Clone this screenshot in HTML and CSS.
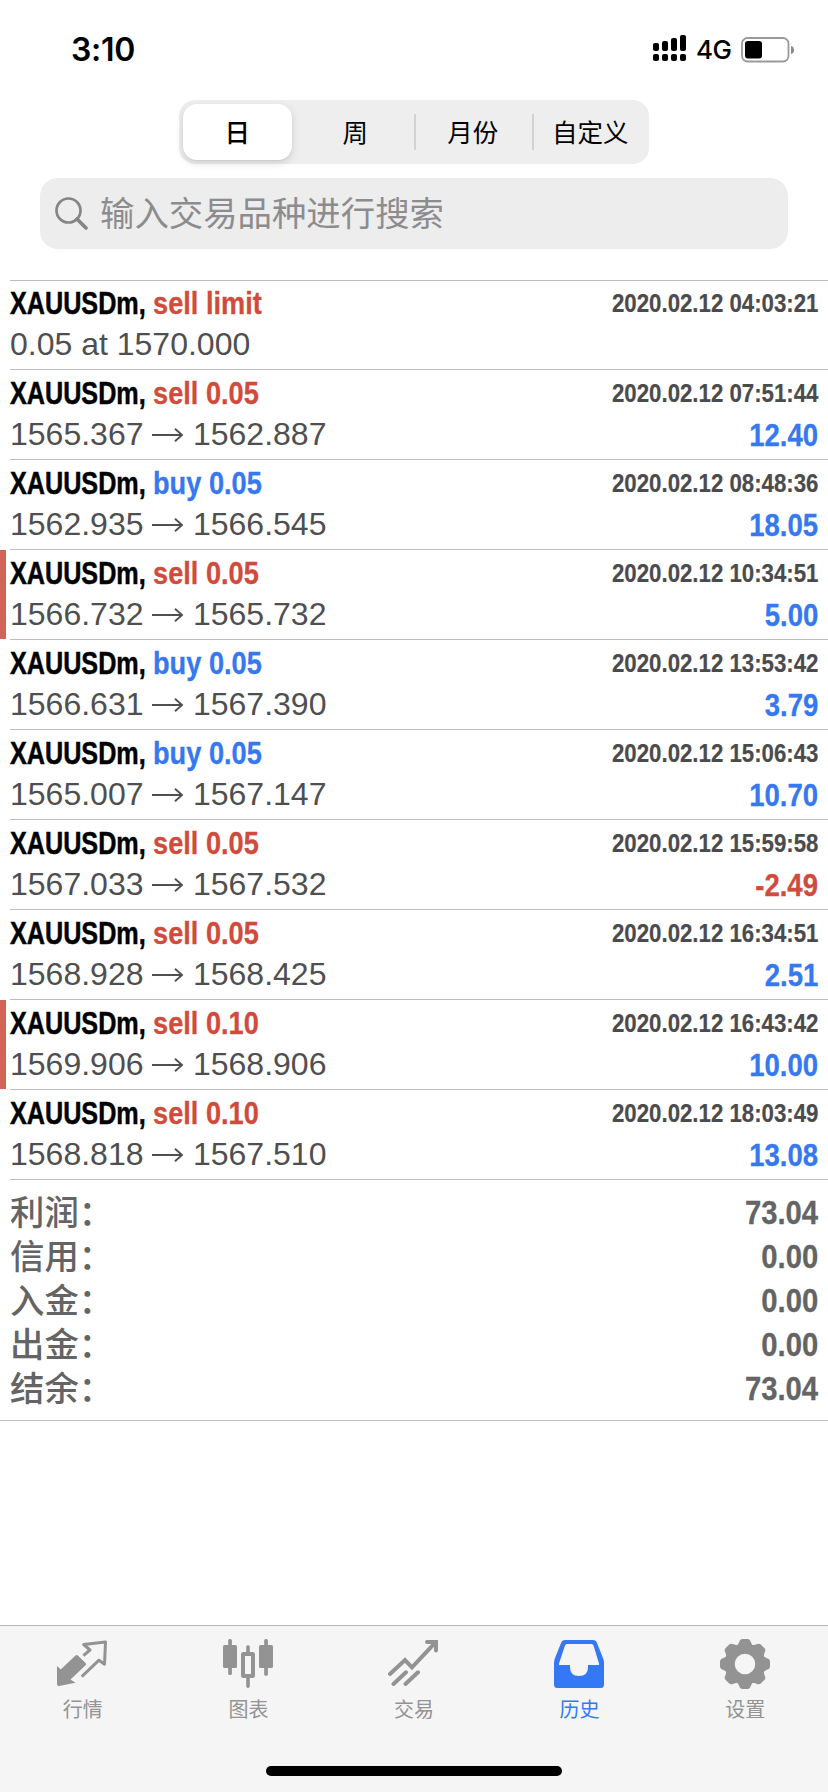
FILE: index.html
```html
<!DOCTYPE html>
<html lang="zh-CN">
<head>
<meta charset="utf-8">
<title>历史</title>
<link rel="stylesheet" href="styles.css">
</head>
<body>
<div class="screen">
  <header class="status">
    <span class="clock">3:10</span>
    <div class="indicators">
      <svg class="signal" width="34" height="27" viewBox="0 0 34 27">
        <rect x="0" y="8" width="6" height="8" rx="2"/><rect x="9" y="6" width="6" height="10" rx="2"/><rect x="18" y="3" width="6" height="13" rx="2"/><rect x="27" y="0" width="6" height="16" rx="2"/>
        <rect x="0" y="19" width="6" height="7" rx="2"/><rect x="9" y="19" width="6" height="7" rx="2"/><rect x="18" y="19" width="6" height="7" rx="2"/><rect x="27" y="19" width="6" height="7" rx="2"/>
      </svg>
      <span class="network">4G</span>
      <svg class="battery" width="54" height="26" viewBox="0 0 54 26">
        <rect x="1" y="1" width="46.5" height="23.5" rx="5.5" fill="none" stroke="#999" stroke-width="1.8"/>
        <rect x="4" y="4" width="17" height="17.5" rx="3"/>
        <path d="M50 9q3 .5 3 4t-3 4z" fill="#8a8a8a"/>
      </svg>
    </div>
  </header>

  <nav class="segments">
    <span class="segment selected">日</span>
    <span class="segment">周</span>
    <span class="segment divided">月份</span>
    <span class="segment divided">自定义</span>
  </nav>

  <div class="search">
    <svg width="34" height="34" viewBox="0 0 34 34" fill="none" stroke="#858587"><circle cx="13.5" cy="13.500" r="12" stroke-width="2.700"/><path d="M22 22l9 9" stroke-width="3.700" stroke-linecap="round"/></svg>
    <span class="placeholder">输入交易品种进行搜索</span>
  </div>

  <main class="deals">
    <article class="deal pending">
      <div class="line"><b class="symbol">XAUUSDm,</b><b class="side sell">sell limit</b><b class="date">2020.02.12 04:03:21</b></div>
      <div class="line"><span class="price">0.05 at 1570.000</span></div>
    </article>
    <article class="deal">
      <div class="line"><b class="symbol">XAUUSDm,</b><b class="side sell">sell 0.05</b><b class="date">2020.02.12 07:51:44</b></div>
      <div class="line"><span class="price">1565.367</span><svg class="arrow" viewBox="0 0 32 14"><path d="M0 7H30M23 .8L30 7L23 13.200"/></svg><span class="price">1562.887</span><b class="profit">12.40</b></div>
    </article>
    <article class="deal">
      <div class="line"><b class="symbol">XAUUSDm,</b><b class="side buy">buy 0.05</b><b class="date">2020.02.12 08:48:36</b></div>
      <div class="line"><span class="price">1562.935</span><svg class="arrow" viewBox="0 0 32 14"><path d="M0 7H30M23 .8L30 7L23 13.200"/></svg><span class="price">1566.545</span><b class="profit">18.05</b></div>
    </article>
    <article class="deal marked">
      <div class="line"><b class="symbol">XAUUSDm,</b><b class="side sell">sell 0.05</b><b class="date">2020.02.12 10:34:51</b></div>
      <div class="line"><span class="price">1566.732</span><svg class="arrow" viewBox="0 0 32 14"><path d="M0 7H30M23 .8L30 7L23 13.200"/></svg><span class="price">1565.732</span><b class="profit">5.00</b></div>
    </article>
    <article class="deal">
      <div class="line"><b class="symbol">XAUUSDm,</b><b class="side buy">buy 0.05</b><b class="date">2020.02.12 13:53:42</b></div>
      <div class="line"><span class="price">1566.631</span><svg class="arrow" viewBox="0 0 32 14"><path d="M0 7H30M23 .8L30 7L23 13.200"/></svg><span class="price">1567.390</span><b class="profit">3.79</b></div>
    </article>
    <article class="deal">
      <div class="line"><b class="symbol">XAUUSDm,</b><b class="side buy">buy 0.05</b><b class="date">2020.02.12 15:06:43</b></div>
      <div class="line"><span class="price">1565.007</span><svg class="arrow" viewBox="0 0 32 14"><path d="M0 7H30M23 .8L30 7L23 13.200"/></svg><span class="price">1567.147</span><b class="profit">10.70</b></div>
    </article>
    <article class="deal">
      <div class="line"><b class="symbol">XAUUSDm,</b><b class="side sell">sell 0.05</b><b class="date">2020.02.12 15:59:58</b></div>
      <div class="line"><span class="price">1567.033</span><svg class="arrow" viewBox="0 0 32 14"><path d="M0 7H30M23 .8L30 7L23 13.200"/></svg><span class="price">1567.532</span><b class="profit loss">-2.49</b></div>
    </article>
    <article class="deal">
      <div class="line"><b class="symbol">XAUUSDm,</b><b class="side sell">sell 0.05</b><b class="date">2020.02.12 16:34:51</b></div>
      <div class="line"><span class="price">1568.928</span><svg class="arrow" viewBox="0 0 32 14"><path d="M0 7H30M23 .8L30 7L23 13.200"/></svg><span class="price">1568.425</span><b class="profit">2.51</b></div>
    </article>
    <article class="deal marked">
      <div class="line"><b class="symbol">XAUUSDm,</b><b class="side sell">sell 0.10</b><b class="date">2020.02.12 16:43:42</b></div>
      <div class="line"><span class="price">1569.906</span><svg class="arrow" viewBox="0 0 32 14"><path d="M0 7H30M23 .8L30 7L23 13.200"/></svg><span class="price">1568.906</span><b class="profit">10.00</b></div>
    </article>
    <article class="deal">
      <div class="line"><b class="symbol">XAUUSDm,</b><b class="side sell">sell 0.10</b><b class="date">2020.02.12 18:03:49</b></div>
      <div class="line"><span class="price">1568.818</span><svg class="arrow" viewBox="0 0 32 14"><path d="M0 7H30M23 .8L30 7L23 13.200"/></svg><span class="price">1567.510</span><b class="profit">13.08</b></div>
    </article>
  </main>

  <section class="summary">
    <div class="total"><span class="label">利润：</span><b class="amount">73.04</b></div>
    <div class="total"><span class="label">信用：</span><b class="amount">0.00</b></div>
    <div class="total"><span class="label">入金：</span><b class="amount">0.00</b></div>
    <div class="total"><span class="label">出金：</span><b class="amount">0.00</b></div>
    <div class="total"><span class="label">结余：</span><b class="amount">73.04</b></div>
  </section>

  <footer class="tabbar">
    <div class="tabs">
      <div class="tab">
        <svg class="icon" viewBox="0 0 50 52"><path fill="currentColor" d="M0 28l3.700 3.500L18.500 17.500q1.200-1 2.300 0l7.800 7.400q1.200 1.200 0 2.400L13.500 41.500l5 3.200L2 47.900q-2 .2-2-1.800z"/><path fill="none" stroke="currentColor" stroke-width="3" stroke-linejoin="round" d="M26.300 17.700L33 12l-6.300-5.500L48.500 4l-1 22.300L42 22.200 24.700 38.700"/></svg>
        <span>行情</span>
      </div>
      <div class="tab">
        <svg class="icon" viewBox="0 0 50 52" fill="currentColor"><rect y="7" width="14" height="23" rx="1.500"/><rect x="5.200" y="1" width="3.700" height="36" rx="1.500"/><rect x="36" y="7" width="14" height="23" rx="1.500"/><rect x="41.200" y="1" width="3.700" height="36.700" rx="1.500"/><rect x="20" y="16" width="10" height="22" rx=".5" fill="none" stroke="currentColor" stroke-width="4"/><path d="M23.200 15V8.500q1.800-3 3.600 0V15zM23.200 39v9.500q1.800 3 3.600 0V39z"/></svg>
        <span>图表</span>
      </div>
      <div class="tab">
        <svg class="icon" viewBox="0 0 50 52" fill="none" stroke="currentColor" stroke-width="4" stroke-linecap="round"><path d="M2 36L17 22l7 7.300L47 4.800M39 4h9v8.500M5.500 46L18 34.300M17.500 46L30 34.300"/></svg>
        <span>交易</span>
      </div>
      <div class="tab active">
        <svg class="icon" viewBox="0 0 50 52" fill="currentColor"><path fill-rule="evenodd" d="M11 2H39q3 0 4 3L49 20q1 2 1 5V46.500q0 3.500-3.500 3.500H3.500Q0 50 0 46.500V25q0-3 1-5L7 5q1-3 4-3zM13 6q-1.500 0-2 1.500L5 25.500V27H16v2q0 9 9 9t9-9v-2H45V25.500L39.500 7.500Q39 6 37.500 6z"/></svg>
        <span>历史</span>
      </div>
      <div class="tab">
        <svg class="icon" viewBox="0 0 50 52"><defs><path id="tooth" d="M-9-17Q-6.500-20-5.800-22Q-5-25-2.300-25H2.300Q5-25 5.800-22Q6.500-20 9-17z"/></defs><g transform="translate(25 26)" fill="currentColor"><circle r="15.300" fill="none" stroke="currentColor" stroke-width="10"/><use href="#tooth"/><use href="#tooth" transform="rotate(45)"/><use href="#tooth" transform="rotate(90)"/><use href="#tooth" transform="rotate(135)"/><use href="#tooth" transform="rotate(180)"/><use href="#tooth" transform="rotate(225)"/><use href="#tooth" transform="rotate(270)"/><use href="#tooth" transform="rotate(315)"/></g></svg>
        <span>设置</span>
      </div>
    </div>
    <div class="home"></div>
  </footer>
</div>
</body>
</html>
```
FILE: styles.css
```css
* { box-sizing: border-box; }
body { margin: 0; background: #fff; color: #000; font-family: "Liberation Sans", "Noto Sans CJK SC", sans-serif; }
.screen { width: 828px; height: 1792px; display: flex; flex-direction: column; overflow: hidden; }

.status { flex: none; height: 100px; padding: 29px 33px 0 71px; display: flex; justify-content: space-between; align-items: flex-start; font-family: Inter, sans-serif; }
.clock { font-size: 32px; font-weight: 600; line-height: 42px; letter-spacing: -0.3px; }
.indicators { display: flex; align-items: flex-start; height: 42px; }
.signal { margin: 6px 9px 0 0; }
.network { width: 36px; margin-right: 9px; font-size: 26px; font-weight: 500; line-height: 42px; letter-spacing: -0.5px; white-space: nowrap; }
.battery { margin-top: 8px; }

.segments { flex: none; align-self: center; width: 470px; height: 64px; border-radius: 16px; background: #eee; display: grid; grid-template-columns: repeat(4, 1fr); }
.segment { display: flex; align-items: center; justify-content: center; padding-bottom: 3px; font: 400 25.5px/36px "Noto Sans CJK SC", sans-serif; white-space: nowrap; }
.selected { margin: 4px 5px 4px 4px; border-radius: 14px; background: #fff; font-weight: 500; box-shadow: 0 3px 8px rgba(0,0,0,.13), 0 1px 2px rgba(0,0,0,.06); }
.divided { background: linear-gradient(#d2d2d4, #d2d2d4) left center / 2px 36px no-repeat; }

.search { flex: none; margin: 14px 40px 0; height: 71px; padding-left: 15px; border-radius: 18px; background: #ededee; display: flex; align-items: center; gap: 11px; color: #8c8c8e; }
.placeholder { padding-bottom: 6px; font: 400 34.4px/50px "Noto Sans CJK SC", sans-serif; }

.deals { flex: none; margin-top: 31px; }
.deal { height: 90px; padding: 4px 10px 0; background: linear-gradient(#bdbdbd, #bdbdbd) 10px 0 / 100% 1px no-repeat; }
.pending { height: 89px; padding-top: 3px; }
.marked { background: linear-gradient(#bdbdbd, #bdbdbd) 10px 0 / 100% 1px no-repeat, linear-gradient(#cf6457, #cf6457) 0 1px / 6px 89px no-repeat; }
.line { display: flex; align-items: center; height: 41px; font-size: 32px; line-height: 41px; white-space: nowrap; }
.symbol { width: 142.5px; transform: scaleX(.787); transform-origin: left; -webkit-text-stroke: .5px; }
.side { width: 130px; transform: scaleX(.85); transform-origin: left; -webkit-text-stroke: .3px; }
.sell { color: #d14b3d; }
.buy { color: #3578f0; }
.date { margin-left: auto; font-size: 26px; color: #4b4b4d; transform: scaleX(.855); transform-origin: right; -webkit-text-stroke: .2px; }
.price { color: #4f4f51; }
.arrow { width: 32px; height: 14px; margin: 0 8.5px 0 9px; fill: none; stroke: #4f4f51; stroke-width: 1.9; }
.profit { margin-left: auto; color: #3578f0; transform: translateY(1px) scaleX(.86); transform-origin: right; -webkit-text-stroke: .3px; }
.loss { color: #d14b3d; }

.summary { flex: none; height: 242px; padding: 11px 10px 0; border-bottom: 1px solid #bdbdbd; background: linear-gradient(#bdbdbd, #bdbdbd) 10px 0 / 100% 1px no-repeat; }
.total { display: flex; justify-content: space-between; height: 44px; line-height: 44px; color: #646464; }
.label { font: 500 34.4px/44px "Noto Sans CJK SC", sans-serif; transform: translateY(-2px); }
.amount { font-size: 34px; transform: scaleX(.86); transform-origin: right; -webkit-text-stroke: .3px; }

.tabbar { flex: none; margin-top: auto; height: 167px; border-top: 1px solid #b5b7b5; background: #f5f5f5; display: flex; flex-direction: column; align-items: center; }
.tabs { width: 100%; display: flex; padding-top: 12px; }
.tab { flex: 1; display: flex; flex-direction: column; align-items: center; color: #939393; font: 400 20px/30px "Noto Sans CJK SC", sans-serif; }
.icon { width: 50px; height: 52px; margin: 0 1px 4px 0; }
.active { color: #3478f6; }
.home { margin-top: auto; margin-bottom: 16px; width: 296px; height: 10px; border-radius: 5px; background: #000; }
```
